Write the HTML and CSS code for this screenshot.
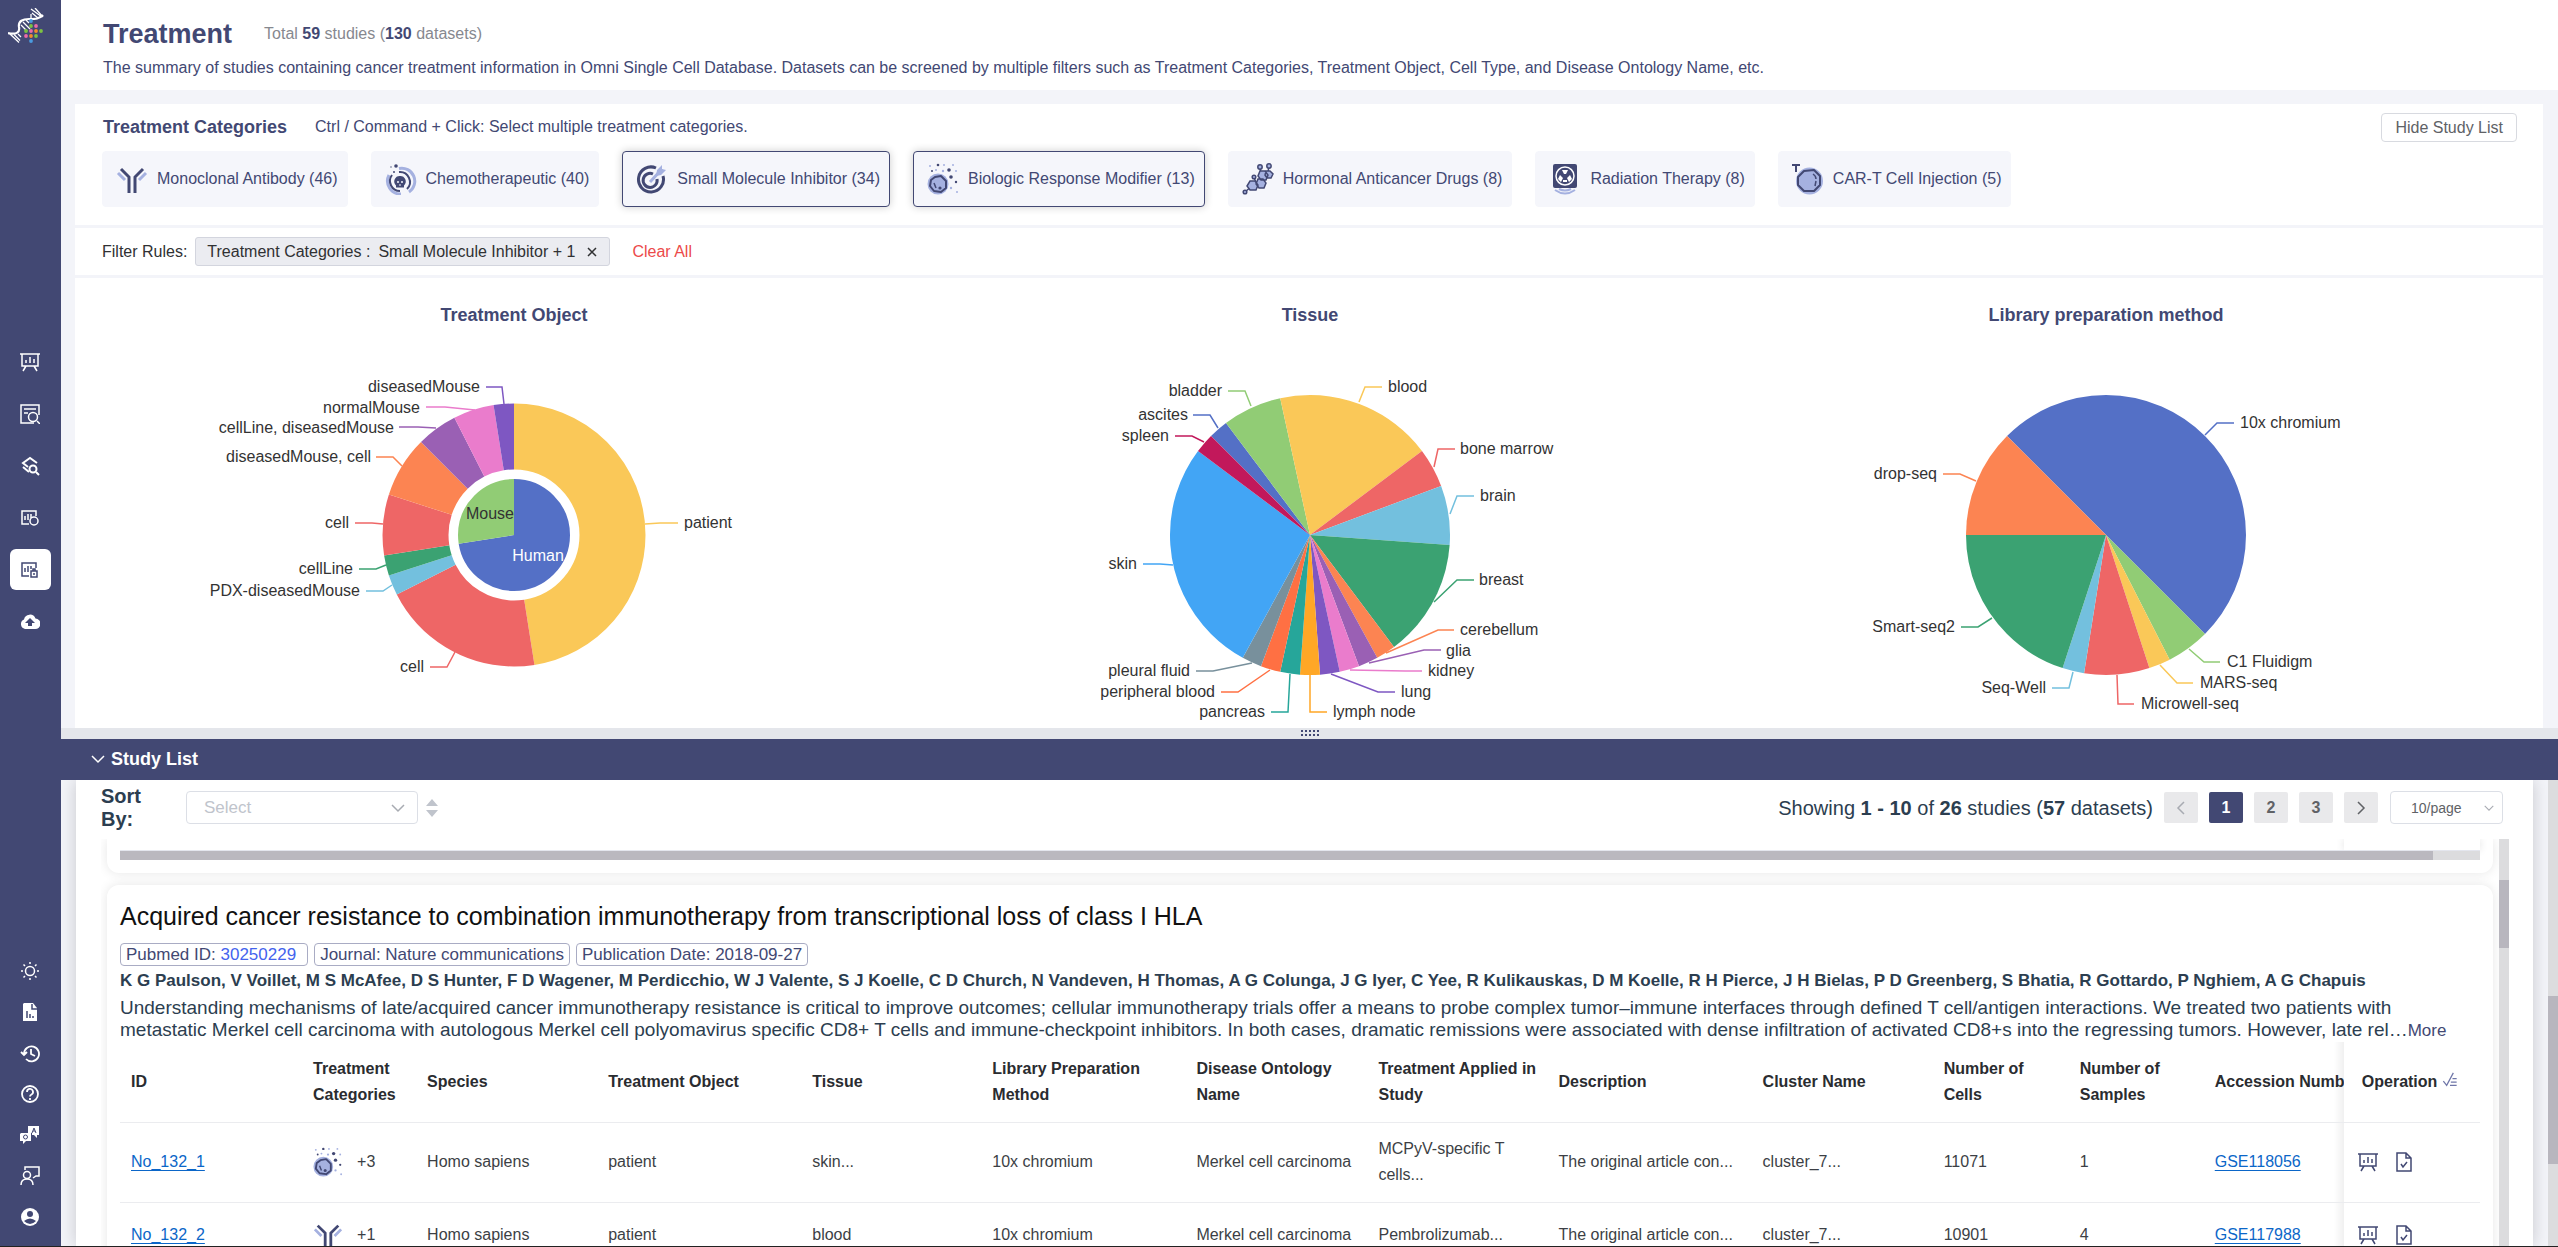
FILE: index.html
```html
<!DOCTYPE html>
<html lang="en">
<head>
<meta charset="utf-8">
<title>Treatment - Omni Single Cell Database</title>
<link rel="stylesheet" href="styles.css">
</head>
<body>
<svg class="sprite" aria-hidden="true">
  <symbol id="i-antibody" viewBox="0 0 32 32">
    <g fill="none" stroke-width="3"><path stroke="#424873" d="M5 6l8 8v16M27 6l-8 8v16"/><path stroke="#a5b1e0" d="M2 10l7 7M30 10l-7 7"/></g>
  </symbol>
  <symbol id="i-chemo" viewBox="0 0 32 32">
    <g fill="none"><path stroke="#a5b1e0" stroke-width="3" d="M4 12A13 13 0 0 0 16 31M14 5.500A13 13 0 0 1 24 29"/><path stroke="#424873" stroke-width="2" d="M7 12A10 10 0 0 0 15 28M14 9A10 10 0 0 1 22 26"/></g>
    <path fill="#424873" d="M15 13a5.500 5.500 0 0 1 4 9.500v2h-8v-2A5.500 5.500 0 0 1 15 13z"/><g fill="#f5f6fb"><circle cx="13" cy="19" r="1"/><circle cx="17" cy="19" r="1"/><path d="M14.500 21h1v2h-1z"/></g>
    <g fill="#424873"><circle cx="11" cy="3" r="1.800"/><circle cx="9" cy="9" r="1"/><circle cx="6" cy="4" r=".7"/></g>
  </symbol>
  <symbol id="i-target" viewBox="0 0 32 32">
    <g fill="none" stroke="#424873" stroke-width="3"><path d="M20 5a12.500 12.500 0 1 0 7 8"/><path d="M17 11a7 7 0 1 0 4 5"/></g>
    <path stroke="#a5b1e0" stroke-width="3" d="M14 19L26 6"/><path fill="#a5b1e0" d="M21 7l5-5v4l4 1-5 5-5 1z"/>
  </symbol>
  <symbol id="i-biologic" viewBox="0 0 32 32">
    <circle cx="11" cy="21" r="10.500" fill="#a5b1e0"/><path fill="#a5b1e0" stroke="#424873" stroke-width="2" stroke-linejoin="round" d="M8 14l6-1 5 5v7l-5 4-7-1-4-5 1-6z"/>
    <path fill="none" stroke="#424873" stroke-width="1.500" d="M7 20l2 5"/>
    <g fill="#424873"><circle cx="13" cy="25" r="1.600"/><circle cx="22" cy="7" r="1.800"/><circle cx="11" cy="2" r="1.300"/><circle cx="24" cy="14" r="1.800"/><circle cx="29" cy="19" r="1.200"/><circle cx="5" cy="8" r="1"/></g>
    <g fill="#a5b1e0"><circle cx="17" cy="2" r="1"/><circle cx="3" cy="3" r="1"/><circle cx="26" cy="2" r="1"/><circle cx="16" cy="8" r="1.200"/><circle cx="29" cy="8" r="1"/><circle cx="30" cy="29" r="1"/><circle cx="24" cy="25" r="1.200"/><circle cx="9" cy="7" r="1"/></g>
  </symbol>
  <symbol id="i-hormone" viewBox="0 0 32 32">
    <path stroke="#424873" stroke-width="1.500" d="M3 29l8-7M12 15l2 4M19 11l-1-7M26 9l1-6"/>
    <g fill="#a5b1e0" stroke="#424873" stroke-width="1.500"><path d="M8 18h5l3 4-2 5H8l-3-4zM16 16h5l3 4-2 5h-5l-3-4zM18 8h5l3 4-2 5h-5l-3-4zM24 8h4l3 3-2 4h-4l-2-3z"/><circle cx="3" cy="29" r="1.800"/><circle cx="12" cy="14" r="1.800"/><circle cx="18" cy="4" r="2.200"/><circle cx="27" cy="3" r="2.200"/></g>
  </symbol>
  <symbol id="i-radiation" viewBox="0 0 32 32">
    <rect x="4" y="1" width="24" height="24" rx="2" fill="#424873"/><circle cx="16" cy="13" r="9" fill="none" stroke="#fff" stroke-width="1.500"/>
    <path fill="#fff" d="M13 7h6l-2 4h-2zM9 16l2-4 3 3-2 4zM23 16l-2-4-3 3 2 4zM14 17h4v2h-4z"/>
    <path fill="none" stroke="#a5b1e0" stroke-width="2" d="M6 27q10 7 20 0M10 26q6 3 12 0"/>
  </symbol>
  <symbol id="i-cart" viewBox="0 0 32 32">
    <path stroke="#424873" stroke-width="2" d="M0 2h8M4 2v7"/><circle cx="17.500" cy="18" r="13.500" fill="#a5b1e0"/>
    <path fill="none" stroke="#424873" stroke-width="2" stroke-linejoin="round" d="M12 8l10-1 6 6v9l-6 6-10 0-6-6 0-8z"/><path fill="none" stroke="#424873" stroke-width="1.500" d="M21 11q3 2 3 5M24 18l-1 5"/>
  </symbol>
  <symbol id="i-board" viewBox="0 0 20 20">
    <path fill="none" stroke="currentColor" stroke-width="1.500" d="M0 2h20M2 2v12h16V2M6 14l-3 5M14 14l3 5M6 11V8M10 11V5M14 11V7"/>
  </symbol>
  <symbol id="i-doccheck" viewBox="0 0 20 20">
    <path fill="none" stroke="currentColor" stroke-width="1.500" d="M3 1h9l5 5v13H3zM12 1v5h5M7 12l2 3 4-5"/>
  </symbol>
  <symbol id="i-down" viewBox="0 0 14 14"><path fill="none" stroke="currentColor" stroke-width="1.500" d="M1 4l6 6 6-6"/></symbol>
</svg>

<div class="app">
  <nav class="sidebar" aria-label="Main">
    <a class="logo" href="#" aria-label="Home">
      <svg width="36" height="36" viewBox="0 0 36 36">
        <g fill="none" stroke="#fff"><path stroke-width="2.200" d="M0 25c9 2 12-1 11-6-1-6 4-8 10-8 7 0 10 0 14-4"/><path stroke-width="1.300" d="M2 26l9 8.500M6 26.500l6 6M10 26l3 3M23 10V6M23 1l11 8M27 0l8 9M24 5l6 5M15 14l7 7M13 17l6 6M18 12l3 3"/></g>
        <g><circle cx="23" cy="13" r="1.900" fill="#4a9be0"/><circle cx="23" cy="18" r="1.900" fill="#7cc242"/><circle cx="28" cy="18" r="1.900" fill="#ec6aa8"/><circle cx="18" cy="23" r="1.900" fill="#7cc242"/><circle cx="23" cy="23" r="1.900" fill="#ec6aa8"/><circle cx="28" cy="23" r="1.900" fill="#f58a2c"/><circle cx="33" cy="23" r="1.900" fill="#7cc242"/><circle cx="18" cy="28" r="1.900" fill="#ec6aa8"/><circle cx="23" cy="28" r="1.900" fill="#f58a2c"/><circle cx="28" cy="28" r="1.900" fill="#7cc242"/><circle cx="23" cy="33" r="1.900" fill="#4a9be0"/></g>
      </svg>
    </a>
    <div class="nav-main">
      <a class="nav-item" href="#" aria-label="Overview"><svg class="nav-icon"><use href="#i-board"/></svg></a>
      <a class="nav-item" href="#" aria-label="Search"><svg class="nav-icon" viewBox="0 0 20 20"><path fill="none" stroke="currentColor" stroke-width="1.500" d="M19 11V1H1v18h13M4 5h12M4 9h4M17 17l3 3"/><circle cx="13" cy="13" r="4.500" fill="none" stroke="currentColor" stroke-width="1.500"/></svg></a>
      <a class="nav-item" href="#" aria-label="Layers"><svg class="nav-icon" viewBox="0 0 20 20"><path fill="none" stroke="currentColor" stroke-width="2" d="M8 11L3 7l7-5 7 5M3 11l6 5M16 16l3 3"/><circle cx="13" cy="13" r="3.500" fill="none" stroke="currentColor" stroke-width="2"/></svg></a>
      <a class="nav-item" href="#" aria-label="Cells"><svg class="nav-icon" viewBox="0 0 20 20"><path fill="none" stroke="currentColor" stroke-width="1.500" d="M9 16H2V3h14v5M5 8v4M8 6v6M11 6v4"/><circle cx="14" cy="13" r="4" fill="none" stroke="currentColor" stroke-width="1.500"/></svg></a>
      <a class="nav-item nav-active" href="#" aria-label="Treatment" aria-current="page"><svg class="nav-icon" viewBox="0 0 20 20"><path fill="none" stroke="currentColor" stroke-width="1.500" d="M9 16H2V3h14v5M5 8v4M8 6v6M11 6v3M11 11h6v6h-6zM13 11V9h2v2M14 13v2"/></svg></a>
      <a class="nav-item" href="#" aria-label="Upload"><svg class="nav-icon" viewBox="0 0 20 20"><path fill="currentColor" fill-rule="evenodd" d="M5 17a5 5 0 0 1-1-9.500 6 6 0 0 1 11.500-1A5 5 0 0 1 15 17zM8 14h4v-3h3l-5-5-5 5h3z"/></svg></a>
    </div>
    <div class="nav-tools">
      <a class="nav-item" href="#" aria-label="Theme"><svg class="nav-icon" viewBox="0 0 20 20"><circle cx="10" cy="10" r="4.500" fill="none" stroke="currentColor" stroke-width="1.500"/><path stroke="currentColor" stroke-width="1.500" d="M10 1v2M10 17v2M1 10h2M17 10h2M3.500 3.500l1.500 1.500M15 15l1.500 1.500M16.500 3.500L15 5M5 15l-1.500 1.500"/></svg></a>
      <a class="nav-item" href="#" aria-label="Report"><svg class="nav-icon" viewBox="0 0 20 20"><path fill="currentColor" d="M4 1h9l4 5v13H3V2z"/><path stroke="#424873" stroke-width="1.500" d="M7 16V9M10 16v-4M13 16v-2M12 2v5h5" fill="none"/></svg></a>
      <a class="nav-item" href="#" aria-label="History"><svg class="nav-icon" viewBox="0 0 20 20"><path fill="none" stroke="currentColor" stroke-width="1.800" d="M4 11a7.500 7.500 0 1 1 2 5M1 9l3 3 3-3M11 6v5l4 2"/></svg></a>
      <a class="nav-item" href="#" aria-label="Help"><svg class="nav-icon" viewBox="0 0 20 20"><circle cx="10" cy="10" r="8" fill="none" stroke="currentColor" stroke-width="1.800"/><path fill="none" stroke="currentColor" stroke-width="1.800" d="M7 8a3 3 0 1 1 4.500 2.500Q10 11.300 10 12.500M10 14v2"/></svg></a>
      <a class="nav-item" href="#" aria-label="Questions"><svg class="nav-icon" viewBox="0 0 20 20"><path fill="currentColor" d="M8 1h11v9h-2v3l-3-3H12V8H8zM1 8h10v8H6l-3 3v-3H0V9z"/><path fill="none" stroke="#424873" d="M12 8l2-5 2 5M13 6h2"/><circle cx="5.500" cy="12" r="2" fill="none" stroke="#424873"/></svg></a>
      <a class="nav-item" href="#" aria-label="Feedback"><svg class="nav-icon" viewBox="0 0 20 20"><path fill="none" stroke="currentColor" stroke-width="1.500" d="M5 4V1h14v9h-3l-3 2M1 19q0-6 6-6t6 6"/><circle cx="7" cy="9" r="3.500" fill="none" stroke="currentColor" stroke-width="1.500"/></svg></a>
      <a class="nav-item" href="#" aria-label="Account"><svg class="nav-icon" viewBox="0 0 20 20"><circle cx="10" cy="10" r="9" fill="currentColor"/><circle cx="10" cy="7" r="3" fill="#424873"/><path fill="#424873" d="M4 14q6-5 12 0-6 6-12 0z"/></svg></a>
    </div>
  </nav>

  <main class="main">
    <header class="page-head">
      <div class="head-row">
        <h1>Treatment</h1>
        <p class="totals">Total <b>59</b> studies (<b>130</b> datasets)</p>
      </div>
      <p class="summary">The summary of studies containing cancer treatment information in Omni Single Cell Database. Datasets can be screened by multiple filters such as Treatment Categories, Treatment Object, Cell Type, and Disease Ontology Name, etc.</p>
    </header>

    <div class="upper">
      <section class="categories">
        <div class="cat-head">
          <h2>Treatment Categories</h2>
          <p>Ctrl / Command + Click: Select multiple treatment categories.</p>
          <button class="hide-btn" type="button">Hide Study List</button>
        </div>
        <div class="cat-list">
          <button class="cat" type="button"><svg class="cat-icon"><use href="#i-antibody"/></svg>Monoclonal Antibody (46)</button>
          <button class="cat" type="button"><svg class="cat-icon"><use href="#i-chemo"/></svg>Chemotherapeutic (40)</button>
          <button class="cat cat-on" type="button" aria-pressed="true"><svg class="cat-icon"><use href="#i-target"/></svg>Small Molecule Inhibitor (34)</button>
          <button class="cat cat-on" type="button" aria-pressed="true"><svg class="cat-icon"><use href="#i-biologic"/></svg>Biologic Response Modifier (13)</button>
          <button class="cat" type="button"><svg class="cat-icon"><use href="#i-hormone"/></svg>Hormonal Anticancer Drugs (8)</button>
          <button class="cat" type="button"><svg class="cat-icon"><use href="#i-radiation"/></svg>Radiation Therapy (8)</button>
          <button class="cat" type="button"><svg class="cat-icon"><use href="#i-cart"/></svg>CAR-T Cell Injection (5)</button>
        </div>
      </section>

      <section class="filters">
        <span>Filter Rules:</span>
        <div class="tag"><span>Treatment Categories :</span><span>Small Molecule Inhibitor + 1</span>
          <button class="tag-close" type="button" aria-label="Remove filter"><svg width="10" height="10" viewBox="0 0 10 10"><path stroke="currentColor" stroke-width="1.500" d="M1 1l8 8M9 1L1 9"/></svg></button>
        </div>
        <button class="clear" type="button">Clear All</button>
      </section>

      <section class="charts">
        <figure class="chart">
          <figcaption>Treatment Object</figcaption>
          <svg class="pie" viewBox="-398 -200 796 392">
            <g class="slices" transform="rotate(-90)" stroke-width="66">
              <circle r="98.500" pathLength="40" stroke="#fac858" stroke-dasharray="19 40"/>
              <circle r="98.500" pathLength="40" stroke="#ee6666" stroke-dasharray="8 40" stroke-dashoffset="-19"/>
              <circle r="98.500" pathLength="40" stroke="#73c0de" stroke-dasharray="1 40" stroke-dashoffset="-27"/>
              <circle r="98.500" pathLength="40" stroke="#3ba272" stroke-dasharray="1 40" stroke-dashoffset="-28"/>
              <circle r="98.500" pathLength="40" stroke="#ee6666" stroke-dasharray="3 40" stroke-dashoffset="-29"/>
              <circle r="98.500" pathLength="40" stroke="#fc8452" stroke-dasharray="3 40" stroke-dashoffset="-32"/>
              <circle r="98.500" pathLength="40" stroke="#9a60b4" stroke-dasharray="2 40" stroke-dashoffset="-35"/>
              <circle r="98.500" pathLength="40" stroke="#ea7ccc" stroke-dasharray="2 40" stroke-dashoffset="-37"/>
              <circle r="98.500" pathLength="40" stroke="#7e57c2" stroke-dasharray="1 40" stroke-dashoffset="-39"/>
            </g>
            <g class="slices" transform="rotate(-90)" stroke-width="56">
              <circle r="28" pathLength="40" stroke="#5470c6" stroke-dasharray="29 40"/>
              <circle r="28" pathLength="40" stroke="#91cc75" stroke-dasharray="11 40" stroke-dashoffset="-29"/>
            </g>
            <g class="leaders">
              <path stroke="#fac858" d="M131-11L146-12H164"/><path stroke="#7e57c2" d="M-10-131L-12-148H-28"/><path stroke="#ea7ccc" d="M-39-125L-69-128H-88"/><path stroke="#9a60b4" d="M-78-107L-96-108H-115"/><path stroke="#fc8452" d="M-112-69L-121-78H-138"/><path stroke="#ee6666" d="M-131-11L-142-12H-159"/><path stroke="#3ba272" d="M-128 30L-138 34H-155"/><path stroke="#73c0de" d="M-122 50L-131 56H-148"/><path stroke="#ee6666" d="M-59 117L-67 132H-84"/>
            </g>
            <text x="170" y="-7">patient</text>
            <g class="end"><text x="-34" y="-143">diseasedMouse</text><text x="-94" y="-122">normalMouse</text><text x="-120" y="-102">cellLine, diseasedMouse</text><text x="-143" y="-73">diseasedMouse, cell</text><text x="-165" y="-7">cell</text><text x="-161" y="39">cellLine</text><text x="-154" y="61">PDX-diseasedMouse</text><text x="-90" y="137">cell</text></g>
            <g class="mid"><text x="-24" y="-16">Mouse</text><text class="on-dark" x="24" y="26">Human</text></g>
          </svg>
        </figure>

        <figure class="chart">
          <figcaption>Tissue</figcaption>
          <svg class="pie" viewBox="-398 -200 796 392">
            <g class="slices" transform="rotate(-135)" stroke-width="140">
              <circle r="70" pathLength="44" stroke="#5470c6" stroke-dasharray="1 44"/>
              <circle r="70" pathLength="44" stroke="#91cc75" stroke-dasharray="3 44" stroke-dashoffset="-1"/>
              <circle r="70" pathLength="44" stroke="#fac858" stroke-dasharray="8 44" stroke-dashoffset="-4"/>
              <circle r="70" pathLength="44" stroke="#ee6666" stroke-dasharray="2 44" stroke-dashoffset="-12"/>
              <circle r="70" pathLength="44" stroke="#73c0de" stroke-dasharray="3 44" stroke-dashoffset="-14"/>
              <circle r="70" pathLength="44" stroke="#3ba272" stroke-dasharray="6 44" stroke-dashoffset="-17"/>
              <circle r="70" pathLength="44" stroke="#fc8452" stroke-dasharray="1 44" stroke-dashoffset="-23"/>
              <circle r="70" pathLength="44" stroke="#9a60b4" stroke-dasharray="1 44" stroke-dashoffset="-24"/>
              <circle r="70" pathLength="44" stroke="#ea7ccc" stroke-dasharray="1 44" stroke-dashoffset="-25"/>
              <circle r="70" pathLength="44" stroke="#7e57c2" stroke-dasharray="1 44" stroke-dashoffset="-26"/>
              <circle r="70" pathLength="44" stroke="#ffa726" stroke-dasharray="1 44" stroke-dashoffset="-27"/>
              <circle r="70" pathLength="44" stroke="#26a69a" stroke-dasharray="1 44" stroke-dashoffset="-28"/>
              <circle r="70" pathLength="44" stroke="#ff7043" stroke-dasharray="1 44" stroke-dashoffset="-29"/>
              <circle r="70" pathLength="44" stroke="#78909c" stroke-dasharray="1 44" stroke-dashoffset="-30"/>
              <circle r="70" pathLength="44" stroke="#42a5f5" stroke-dasharray="12 44" stroke-dashoffset="-31"/>
              <circle r="70" pathLength="44" stroke="#c2185b" stroke-dasharray="1 44" stroke-dashoffset="-43"/>
            </g>
            <g class="leaders">
              <path stroke="#fac858" d="M49-133L55-148H72"/><path stroke="#ee6666" d="M124-68L128-86H145"/><path stroke="#73c0de" d="M140-21L147-39H164"/><path stroke="#3ba272" d="M124 67L147 45H164"/><path stroke="#fc8452" d="M76 118L128 95H144"/><path stroke="#9a60b4" d="M59 128L114 115H131"/><path stroke="#ea7ccc" d="M40 135L95 136H112"/><path stroke="#7e57c2" d="M21 139L68 157H85"/><path stroke="#ffa726" d="M0 140V177H17"/><path stroke="#26a69a" d="M-20 139L-22 177H-39"/><path stroke="#ff7043" d="M-40 135L-72 157H-89"/><path stroke="#78909c" d="M-58 128L-97 136H-114"/><path stroke="#42a5f5" d="M-137 30L-150 29H-167"/><path stroke="#c2185b" d="M-106-93L-118-99H-135"/><path stroke="#5470c6" d="M-92-107L-100-120H-117"/><path stroke="#91cc75" d="M-59-129L-65-144H-82"/>
            </g>
            <text x="78" y="-143">blood</text><text x="150" y="-81">bone marrow</text><text x="170" y="-34">brain</text><text x="169" y="50">breast</text><text x="150" y="100">cerebellum</text><text x="136" y="121">glia</text><text x="118" y="141">kidney</text><text x="91" y="162">lung</text><text x="23" y="182">lymph node</text>
            <g class="end"><text x="-45" y="182">pancreas</text><text x="-95" y="162">peripheral blood</text><text x="-120" y="141">pleural fluid</text><text x="-173" y="34">skin</text><text x="-141" y="-94">spleen</text><text x="-122" y="-115">ascites</text><text x="-88" y="-139">bladder</text></g>
          </svg>
        </figure>

        <figure class="chart">
          <figcaption>Library preparation method</figcaption>
          <svg class="pie" viewBox="-398 -200 796 392">
            <g class="slices" transform="rotate(-135)" stroke-width="140">
              <circle r="70" pathLength="40" stroke="#5470c6" stroke-dasharray="20 40"/>
              <circle r="70" pathLength="40" stroke="#91cc75" stroke-dasharray="2 40" stroke-dashoffset="-20"/>
              <circle r="70" pathLength="40" stroke="#fac858" stroke-dasharray="1 40" stroke-dashoffset="-22"/>
              <circle r="70" pathLength="40" stroke="#ee6666" stroke-dasharray="3 40" stroke-dashoffset="-23"/>
              <circle r="70" pathLength="40" stroke="#73c0de" stroke-dasharray="1 40" stroke-dashoffset="-26"/>
              <circle r="70" pathLength="40" stroke="#3ba272" stroke-dasharray="8 40" stroke-dashoffset="-27"/>
              <circle r="70" pathLength="40" stroke="#fc8452" stroke-dasharray="5 40" stroke-dashoffset="-35"/>
            </g>
            <g class="leaders">
              <path stroke="#5470c6" d="M99-100L111-112H128"/><path stroke="#91cc75" d="M83 114L98 127H114"/><path stroke="#fac858" d="M54 130L71 148H87"/><path stroke="#ee6666" d="M11 140L12 169H28"/><path stroke="#73c0de" d="M-33 137L-37 153H-54"/><path stroke="#3ba272" d="M-114 83L-128 92H-145"/><path stroke="#fc8452" d="M-130-54L-146-61H-163"/>
            </g>
            <text x="134" y="-107">10x chromium</text><text x="121" y="132">C1 Fluidigm</text><text x="94" y="153">MARS-seq</text><text x="35" y="174">Microwell-seq</text>
            <g class="end"><text x="-60" y="158">Seq-Well</text><text x="-151" y="97">Smart-seq2</text><text x="-169" y="-56">drop-seq</text></g>
          </svg>
        </figure>
      </section>
    </div>

    <div class="splitter"><svg width="18" height="6" viewBox="0 0 18 6"><path stroke="#424873" stroke-width="2" stroke-dasharray="2 2" d="M0 1h18M0 5h18"/></svg></div>

    <button class="study-bar" type="button"><svg width="14" height="14"><use href="#i-down"/></svg>Study List</button>

    <div class="lower">
      <section class="study">
        <div class="toolbar">
          <label class="sort-label" for="sort">Sort By:</label>
          <div class="select sort-select">
            <select id="sort"><option>Select</option></select>
            <svg width="14" height="14"><use href="#i-down"/></svg>
          </div>
          <button class="order" type="button" aria-label="Toggle order"><svg width="12" height="18" viewBox="0 0 12 18"><path fill="#c0c4cc" d="M0 7l6-7 6 7zM0 11h12l-6 7z"/></svg></button>
          <p class="showing">Showing <b>1 - 10</b> of <b>26</b> studies (<b>57</b> datasets)</p>
          <div class="pages">
            <button class="page" type="button" aria-label="Previous" disabled><svg class="turn-l" width="14" height="14"><use href="#i-down"/></svg></button>
            <button class="page page-on" type="button">1</button>
            <button class="page" type="button">2</button>
            <button class="page" type="button">3</button>
            <button class="page" type="button" aria-label="Next"><svg class="turn-r" width="14" height="14"><use href="#i-down"/></svg></button>
          </div>
          <div class="select size-select">
            <select aria-label="Page size"><option>10/page</option></select>
            <svg width="10" height="10"><use href="#i-down"/></svg>
          </div>
        </div>

        <div class="list">
          <div class="list-cards">
            <article class="card card-prev"><div class="fixed-edge"></div><div class="hscroll"><div class="hthumb"></div></div></article>
            <article class="card">
              <h3>Acquired cancer resistance to combination immunotherapy from transcriptional loss of class I HLA</h3>
              <ul class="meta">
                <li>Pubmed ID: <a href="#">30250229</a></li>
                <li>Journal: Nature communications</li>
                <li>Publication Date: 2018-09-27</li>
              </ul>
              <p class="authors">K G Paulson, V Voillet, M S McAfee, D S Hunter, F D Wagener, M Perdicchio, W J Valente, S J Koelle, C D Church, N Vandeven, H Thomas, A G Colunga, J G Iyer, C Yee, R Kulikauskas, D M Koelle, R H Pierce, J H Bielas, P D Greenberg, S Bhatia, R Gottardo, P Nghiem, A G Chapuis</p>
              <p class="abstract">Understanding mechanisms of late/acquired cancer immunotherapy resistance is critical to improve outcomes; cellular immunotherapy trials offer a means to probe complex tumor–immune interfaces through defined T cell/antigen interactions. We treated two patients with metastatic Merkel cell carcinoma with autologous Merkel cell polyomavirus specific CD8+ T cells and immune-checkpoint inhibitors. In both cases, dramatic remissions were associated with dense infiltration of activated CD8+s into the regressing tumors. However, late rel…<a href="#">More</a></p>
              <table class="data">
                <colgroup><col class="w182"><col class="w114"><col class="w181"><col class="w204"><col class="w180"><col class="w204"><col class="w182"><col class="w180"><col class="w204"><col class="w181"><col class="w136"><col class="w136"><col class="w139"><col class="w136"></colgroup>
                <thead>
                  <tr><th>ID</th><th>Treatment Categories</th><th>Species</th><th>Treatment Object</th><th>Tissue</th><th>Library Preparation Method</th><th>Disease Ontology Name</th><th>Treatment Applied in Study</th><th>Description</th><th>Cluster Name</th><th>Number of Cells</th><th>Number of Samples</th><th class="last">Accession Number</th><th class="ops">Operation <svg width="16" height="15" viewBox="0 0 16 18"><path fill="none" stroke="#6f76a8" stroke-width="1.500" d="M0 11l4 5L12 1M11 8h5M9 12h7M8 16h8"/></svg></th></tr>
                </thead>
                <tbody>
                  <tr><td><a href="#">No_132_1</a></td><td><div class="treat"><svg class="treat-icon"><use href="#i-biologic"/></svg>+3</div></td><td>Homo sapiens</td><td>patient</td><td>skin...</td><td>10x chromium</td><td>Merkel cell carcinoma</td><td>MCPyV-specific T cells...</td><td>The original article con...</td><td>cluster_7...</td><td>11071</td><td>1</td><td class="last"><a href="#">GSE118056</a></td><td class="ops"><div class="op-row"><button type="button" aria-label="View"><svg class="op-icon"><use href="#i-board"/></svg></button><button type="button" aria-label="Select"><svg class="op-icon"><use href="#i-doccheck"/></svg></button></div></td></tr>
                  <tr><td><a href="#">No_132_2</a></td><td><div class="treat"><svg class="treat-icon"><use href="#i-antibody"/></svg>+1</div></td><td>Homo sapiens</td><td>patient</td><td>blood</td><td>10x chromium</td><td>Merkel cell carcinoma</td><td>Pembrolizumab...</td><td>The original article con...</td><td>cluster_7...</td><td>10901</td><td>4</td><td class="last"><a href="#">GSE117988</a></td><td class="ops"><div class="op-row"><button type="button" aria-label="View"><svg class="op-icon"><use href="#i-board"/></svg></button><button type="button" aria-label="Select"><svg class="op-icon"><use href="#i-doccheck"/></svg></button></div></td></tr>
                </tbody>
              </table>
            </article>
          </div>
          <div class="vscroll list-scroll"><div class="vthumb"></div></div>
        </div>
      </section>
      <div class="vscroll page-scroll"><div class="vthumb"></div></div>
    </div>
  </main>
</div>
</body>
</html>
```
FILE: styles.css
```css
* { box-sizing: border-box; }
body { margin: 0; font: 16px/20px "Liberation Sans", Arial, sans-serif; color: #2c3e50; background: #f3f4f9; }
h1, h2, h3, p, ul, figure { margin: 0; padding: 0; }
button, select { font: inherit; color: inherit; }
button { border: 0; background: none; padding: 0; }
.sprite { display: none; }

.app { display: flex; height: 100vh; overflow: hidden; border-bottom: 1px solid #222; }

/* Sidebar */
.sidebar { width: 61px; flex: none; background: #424873; display: flex; flex-direction: column; align-items: center; padding: 8px 1px 9px 0; }
.logo { height: 36px; margin-right: 8px; }
.nav-main { display: grid; gap: 11px; margin-top: 297px; }
.nav-tools { display: grid; margin-top: auto; }
.nav-item { width: 41px; height: 41px; display: grid; place-items: center; color: #fff; border-radius: 6px; }
.nav-active { background: #fff; color: #424873; }
.nav-icon { width: 20px; height: 20px; }

.main { flex: 1; min-width: 0; display: flex; flex-direction: column; }

/* Page header */
.page-head { background: #fff; color: #424873; height: 90px; padding: 16px 42px 0; }
.head-row { display: flex; align-items: center; gap: 32px; height: 36px; }
h1 { font-size: 27px; line-height: 36px; }
.totals { color: #86888f; }
.totals b { color: #424873; }
.summary { margin-top: 6px; }

/* Categories, filters and charts */
.upper { margin: 14px 15px 0 14px; display: grid; gap: 3px; }
.upper section { background: #fff; }
.categories { color: #424873; height: 121px; padding: 9px 26px 0 27px; }
.cat-head { display: flex; align-items: center; height: 29px; gap: 28px; padding-left: 1px; }
.cat-head h2, .cat-head p { padding-bottom: 2px; }
h2 { font-size: 18px; line-height: 28px; }
.hide-btn { margin-left: auto; height: 29px; padding: 0 13px; border: 1px solid #d8dae0; border-radius: 4px; background: #fff; color: #606266; }
.cat-list { display: flex; gap: 23px; margin-top: 9px; }
.cat { height: 56px; display: flex; align-items: center; gap: 9px; padding: 0 9px 0 13px; background: #f5f6fb; border: 1px solid #f5f6fb; border-radius: 4px; white-space: nowrap; }
.cat-on { border-color: #424873; box-shadow: 0 0 8px rgba(0, 0, 0, .2); }
.cat-icon { width: 32px; height: 32px; }
.filters { height: 47px; display: flex; align-items: center; padding: 0 27px; color: #303133; }
.tag { display: flex; align-items: center; gap: 8px; height: 29px; margin: 0 22px 0 8px; padding: 0 12px 0 11px; background: #ebecf1; border: 1px solid #d3d5de; border-radius: 3px; }
.tag-close { height: 10px; line-height: 0; margin-left: 4px; }
.clear { color: #ec4a4a; }
.charts { display: grid; grid-template-columns: repeat(3, 1fr); padding: 23px 39px 0 41px; height: 450px; }
.chart { text-align: center; }
figcaption { font-size: 18px; font-weight: bold; line-height: 28px; color: #424873; }
.pie { display: block; width: 100%; height: 392px; margin-top: 6px; }
.pie text { font-size: 16px; fill: #333; }
.pie .on-dark { fill: #fff; }
.slices, .leaders { fill: none; }
.leaders { stroke-width: 1.5; }
.end { text-anchor: end; }
.mid { text-anchor: middle; }

.splitter { height: 11px; background: #e4e6eb; display: grid; place-items: start center; padding-top: 2px; }
.study-bar { height: 41px; background: #424873; color: #fff; font-size: 18px; font-weight: bold; display: flex; align-items: center; gap: 6px; padding: 0 30px 2px; }

/* Study list */
.lower { flex: 1; min-height: 0; display: flex; overflow: hidden; }
.study { flex: 1; min-width: 0; margin: 0 15px; background: #fff; box-shadow: 0 0 16px rgba(0, 0, 0, .18); display: flex; flex-direction: column; }
.toolbar { display: flex; align-items: center; height: 59px; padding: 0 30px 4px 25px; }
.sort-label { width: 85px; padding-right: 25px; font-size: 20px; line-height: 23px; font-weight: bold; }
.select { display: grid; align-items: center; height: 33px; }
.select select, .select svg { grid-area: 1 / 1; }
.select select { appearance: none; width: 100%; height: 33px; border: 1px solid #dcdfe6; border-radius: 4px; background: #fff; }
.select svg { justify-self: end; color: #a8abb2; pointer-events: none; }
.sort-select { width: 232px; }
.sort-select select { padding: 0 17px; font-size: 17px; color: #c0c4cc; }
.sort-select svg { margin-right: 13px; }
.order { margin-left: 8px; height: 18px; line-height: 0; }
.showing { margin-left: auto; font-size: 20px; }
.pages { display: flex; gap: 11px; margin: 0 12px 0 11px; }
.page { width: 34px; height: 31px; border-radius: 2px; background: #e9e9eb; color: #606266; font-weight: bold; display: grid; place-items: center; }
.page:disabled { color: #a8abb2; }
.page-on { background: #424873; color: #fff; }
.turn-l { transform: rotate(90deg); }
.turn-r { transform: rotate(-90deg); }
.size-select { width: 113px; }
.size-select select { padding: 0 20px; font-size: 14px; color: #606266; }
.size-select svg { margin-right: 9px; }

.list { flex: 1; min-height: 0; display: flex; margin: 0 24px 0 25px; }
.list-cards { flex: 1; min-width: 0; overflow: hidden; padding: 0 6px; }
.card { background: #fff; border-radius: 12px; box-shadow: 0 0 12px rgba(0, 0, 0, .1); padding: 15px 13px 0; }
.card-prev { height: 34px; border-radius: 0 0 12px 12px; padding-top: 0; margin-bottom: 12px; }
.fixed-edge { width: 136px; height: 11px; margin-left: auto; box-shadow: 0 0 8px rgba(0, 0, 0, .12); }
.hscroll { height: 10px; background: #dcdcde; border-top: 1px solid #e4e6ee; }
.hthumb { width: 98%; height: 9px; background: #bab8bf; }
h3 { font-size: 25px; line-height: 33px; font-weight: normal; color: #111; }
.meta { display: flex; gap: 6px; list-style: none; margin-top: 10px; color: #424873; font-size: 17px; }
.meta li { border: 1px solid #a9acc4; border-radius: 4px; height: 23px; line-height: 21px; padding: 0 5px; }
.meta a { color: #4463ee; text-decoration: none; padding-right: 6px; }
.authors { font-size: 17px; font-weight: bold; margin-top: 5px; line-height: 20px; }
.abstract { font-size: 19px; line-height: 22px; margin-top: 6px; }
.abstract a { color: #424873; font-size: 17px; text-decoration: none; }

.data { table-layout: fixed; width: 100%; border-collapse: collapse; line-height: 26px; color: #3c3f45; }
.data th, .data td { text-align: left; padding: 0 11px; height: 80px; border-bottom: 1px solid #ebecef; vertical-align: middle; }
.data th { color: #2a2c30; }
.data tbody tr + tr td { height: 66px; }
.data td a { color: #0b66c8; text-underline-offset: 3px; }
.data .last { padding: 0 0 0 10px; white-space: nowrap; overflow: hidden; background: linear-gradient(to left, rgba(0, 0, 0, .06), transparent 10px); }
.data .ops { padding: 0 0 0 18px; white-space: nowrap; background: #fff; }
.treat { display: flex; align-items: center; gap: 14px; }
.treat-icon { width: 30px; height: 30px; }
.op-row { display: flex; gap: 16px; color: #424873; }
.op-icon { width: 20px; height: 20px; display: block; }
.data td.ops { padding-left: 14px; }
.w182 { width: 182px; } .w114 { width: 114px; } .w181 { width: 181px; } .w204 { width: 204px; }
.w180 { width: 180px; } .w136 { width: 136px; } .w139 { width: 139px; }

.vscroll { width: 10px; flex: none; background: #dcdcde; }
.vthumb { background: #b8b6be; }
.list-scroll .vthumb { margin-top: 41px; height: 68px; }
.page-scroll .vthumb { margin-top: 216px; height: 168px; }
```
